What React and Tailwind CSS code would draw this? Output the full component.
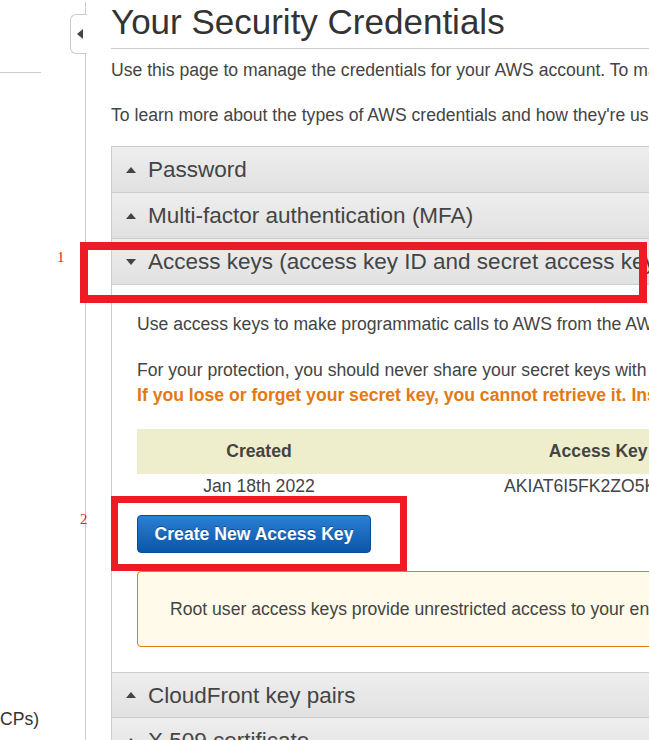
export default function App() {
  return (
    <div className="relative w-[649px] h-[740px] overflow-hidden bg-white font-['Liberation_Sans',Arial,sans-serif] text-[#444]">
      <div className="flex h-full">
        {/* left nav, mostly cut off */}
        <aside className="relative w-[86px] shrink-0 border-r border-[#ccc] mt-[2px]">
          <div className="mt-[70px] w-[41px] border-t border-[#ccc]" />
          <div className="absolute left-[70px] top-[12px] w-[17px] h-[40px] bg-white border border-r-0 border-[#ccc] rounded-l-[6px] flex items-center justify-center">
            <span className="w-0 h-0 border-y-[5px] border-y-transparent border-r-[6px] border-r-[#444] ml-[1px]" />
          </div>
          <div className="absolute left-0 top-[704px] text-[17.6px] text-[#333] whitespace-nowrap">CPs)</div>
        </aside>

        <main className="flex-1 min-w-0 overflow-hidden pl-[25px]">
          <div className="w-[1000px]">
            <h1 className="text-[35px] leading-[40px] pt-[2px] pb-[6px] text-[#333] border-b border-[#ccc]">
              Your Security Credentials
            </h1>
            <p className="text-[17.6px] leading-[25px] mt-[9px] whitespace-nowrap">
              Use this page to manage the credentials for your AWS account. To manage credentials for AWS Identity and Access Management (IAM) users, use the IAM Console.
            </p>
            <p className="text-[17.6px] leading-[25px] mt-[20px] whitespace-nowrap">
              To learn more about the types of AWS credentials and how they're used, see AWS Security Credentials in AWS General Reference.
            </p>

            <div className="mt-[18px] border-l border-t border-[#ccc]">
              <Header open={false}>Password</Header>
              <Header open={false}>Multi-factor authentication (MFA)</Header>
              <Header open>Access keys (access key ID and secret access key)</Header>

              <div className="pl-[25px] pt-[27px] pb-[25px] text-[17.6px] leading-[25px]">
                <p className="whitespace-nowrap">
                  Use access keys to make programmatic calls to AWS from the AWS CLI, Tools for PowerShell, AWS SDKs, or direct AWS API calls.
                </p>
                <p className="mt-[21px] whitespace-nowrap">
                  For your protection, you should never share your secret keys with anyone. As a best practice, we recommend frequent key rotation.
                </p>
                <p className="whitespace-nowrap font-bold text-[#e47911]">
                  If you lose or forget your secret key, you cannot retrieve it. Instead, create a new access key and make the old key inactive.
                </p>

                <table className="mt-[21px] border-collapse">
                  <thead>
                    <tr className="bg-[#eeeecd] h-[45px]">
                      <th className="w-[244px] font-bold">Created</th>
                      <th className="w-[457px] font-bold">Access Key ID</th>
                      <th className="w-[200px] font-bold">Status</th>
                    </tr>
                  </thead>
                  <tbody>
                    <tr className="h-[24px]">
                      <td className="text-center">Jan 18th 2022</td>
                      <td className="text-center">AKIAT6I5FK2ZO5KXXXXX</td>
                      <td className="text-center">Active</td>
                    </tr>
                  </tbody>
                </table>

                <button className="mt-[16px] w-[234px] h-[38px] rounded-[4px] border border-[#0a4c94] bg-gradient-to-b from-[#2a7fd4] to-[#0b56a8] text-white font-bold text-[17.6px] [text-shadow:0_-1px_0_rgba(0,0,0,0.35)]">
                  Create New Access Key
                </button>

                <div className="mt-[18px] w-[800px] h-[76px] flex items-center pl-[32px] bg-[#fffae9] border border-[#e0800f] rounded-[4px] whitespace-nowrap">
                  Root user access keys provide unrestricted access to your entire AWS account. If you need long-term access keys, we recommend creating a new IAM user.
                </div>
              </div>

              <Header open={false} top>CloudFront key pairs</Header>
              <Header open={false}>X.509 certificate</Header>
            </div>
          </div>
        </main>
      </div>

      {/* annotation boxes */}
      <div className="absolute left-[80px] top-[242px] w-[567px] h-[61px] border-[8px] border-[#ed1c24]" />
      <div className="absolute left-[111px] top-[496px] w-[296px] h-[75px] border-[7px] border-[#ed1c24]" />
      <span className="absolute left-[57px] top-[246px] text-[15px] text-[#ed1c24] font-['Liberation_Serif',serif]">1</span>
      <span className="absolute left-[80px] top-[508px] text-[15px] text-[#ed1c24] font-['Liberation_Serif',serif]">2</span>
    </div>
  );
}

function Header({ open, top, children }) {
  return (
    <div className={`h-[46px] flex items-center bg-gradient-to-b from-[#eeeeee] to-[#e1e1e1] border-b border-[#ccc] ${top ? "border-t" : ""}`}>
      <span className="w-[36px] flex justify-center pl-[1px]">
        {open ? (
          <span className="w-0 h-0 border-x-[5px] border-x-transparent border-t-[6px] border-t-[#444]" />
        ) : (
          <span className="w-0 h-0 border-x-[5px] border-x-transparent border-b-[6px] border-b-[#444]" />
        )}
      </span>
      <span className="text-[22.5px] text-[#444] whitespace-nowrap pt-[1px]">{children}</span>
    </div>
  );
}
